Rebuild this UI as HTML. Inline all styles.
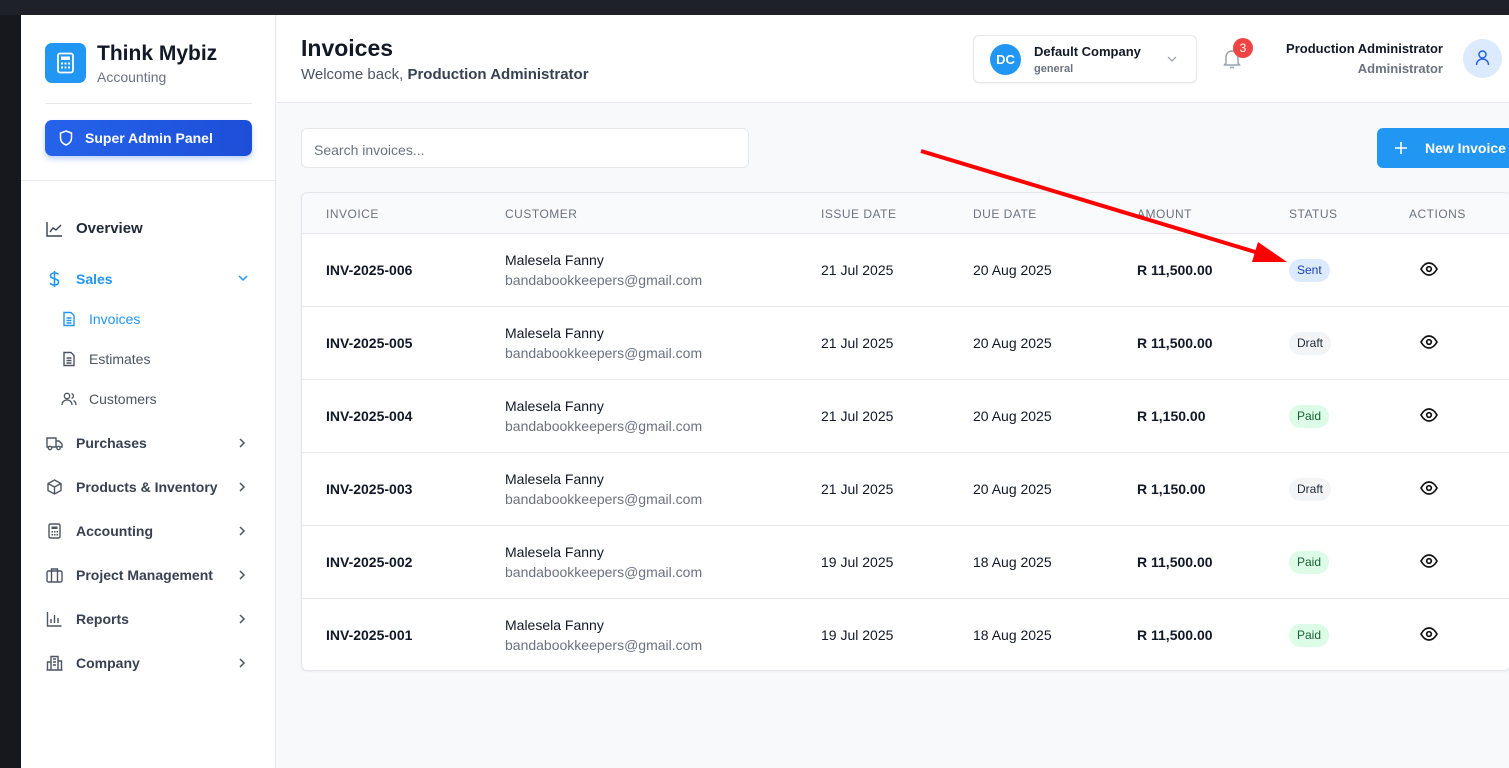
<!DOCTYPE html>
<html><head><meta charset="utf-8"><style>
*{box-sizing:border-box;margin:0;padding:0}
body{width:1509px;height:768px;overflow:hidden;background:#f8f9fb;font-family:"Liberation Sans",sans-serif;position:relative;color:#111827}
.abs{position:absolute}
.topbar{left:0;top:0;width:1509px;height:15px;background:#1f2128}
.leftdark{left:0;top:15px;width:21px;height:753px;background:#17181d}
.side{left:21px;top:15px;width:255px;height:753px;background:#fff;border-right:1px solid #e5e7eb}
.hdr{left:277px;top:15px;width:1232px;height:88px;background:#fff;border-bottom:1px solid #e5e7eb}
.nav{position:absolute;left:25px;font-size:14px;color:#374151;font-weight:bold;display:flex;align-items:center}
.nav svg{margin-right:13px}
.chev{position:absolute;left:216px;color:#4b5563}
.sub{position:absolute;left:40px;font-size:14px;color:#4b5563;display:flex;align-items:center}
.sub svg{margin-right:12px}
.th{position:absolute;top:207px;font-size:12px;color:#6b7280;letter-spacing:.5px}
.row{position:absolute;left:302px;width:1207px;height:73px;border-top:1px solid #e5e7eb;background:#fff}
.c{position:absolute;font-size:14px;color:#111827}
.b{font-weight:bold}
.badge{position:absolute;left:987px;top:25px;height:23px;padding:0 8px;border-radius:12px;font-size:12px;line-height:23px}
</style></head><body>
<div class="abs topbar"></div>
<div class="abs leftdark"></div>
<div class="abs side">
  <div class="abs" style="left:24px;top:28px;width:41px;height:40px;background:#2196f3;border-radius:7px">
    <svg width="41" height="40" viewBox="0 0 41 40"><rect x="13" y="10.5" width="15" height="19" rx="2" fill="none" stroke="#fff" stroke-width="1.8"/><rect x="16" y="13.5" width="9" height="3.5" fill="#fff"/><g fill="#fff"><rect x="16" y="19.5" width="2" height="2"/><rect x="19.5" y="19.5" width="2" height="2"/><rect x="23" y="19.5" width="2" height="2"/><rect x="16" y="23.5" width="2" height="2"/><rect x="19.5" y="23.5" width="2" height="2"/><rect x="23" y="23.5" width="2" height="2"/></g></svg>
  </div>
  <div class="abs" style="left:76px;top:27px;font-size:21px;font-weight:bold;color:#111827">Think Mybiz</div>
  <div class="abs" style="left:76px;top:54px;font-size:14px;color:#6b7280">Accounting</div>
  <div class="abs" style="left:24px;top:88px;width:207px;height:1px;background:#e5e7eb"></div>
  <div class="abs" style="left:24px;top:105px;width:207px;height:36px;border-radius:7px;background:linear-gradient(90deg,#2563eb,#1d4ed8);box-shadow:0 3px 6px rgba(37,99,235,.3);color:#fff;font-size:14px;font-weight:bold;display:flex;align-items:center;padding-left:14px">
    <svg width="14" height="16" viewBox="0 0 14 16" style="margin-right:12px"><path d="M7 1L12.5 3v5c0 3.5-2.5 5.8-5.5 7C4 13.8 1.5 11.5 1.5 8V3z" fill="none" stroke="#fff" stroke-width="1.5"/></svg>Super Admin Panel</div>
  <div class="abs" style="left:0;top:165px;width:255px;height:1px;background:#e5e7eb"></div>
  <div class="nav" style="top:205px;font-size:15px;color:#1f2937"><svg width="17" height="16" viewBox="0 0 17 16"><path d="M1 1v14h15M4 11l3-4 3 2 5-5" fill="none" stroke="#374151" stroke-width="1.4"/></svg>Overview</div>
  <div class="nav" style="top:255px;color:#2196f3"><svg width="17" height="18" viewBox="0 0 17 18"><path d="M8.5 1v16M12.5 4.5C12 3.5 10.5 3 8.5 3 6 3 4.5 4 4.5 5.8 4.5 9.5 12.5 8 12.5 12 12.5 14 11 15 8.5 15 6 15 4.8 14.2 4.2 13" fill="none" stroke="#2196f3" stroke-width="1.6"/></svg>Sales</div>
  <svg class="chev" style="top:258px" width="12" height="10" viewBox="0 0 12 10"><path d="M2 3l4 4 4-4" fill="none" stroke="#2196f3" stroke-width="1.5"/></svg>
  <div class="sub" style="top:296px;color:#2196f3"><svg width="16" height="16" viewBox="0 0 16 16"><path d="M3 1.5h7l3 3v10H3z M5.5 7h5M5.5 9.5h5M5.5 12h5" fill="none" stroke="#2196f3" stroke-width="1.4"/></svg>Invoices</div>
  <div class="sub" style="top:336px"><svg width="16" height="16" viewBox="0 0 16 16"><path d="M3 1.5h7l3 3v10H3z M5.5 7h5M5.5 9.5h5M5.5 12h5" fill="none" stroke="#4b5563" stroke-width="1.4"/></svg>Estimates</div>
  <div class="sub" style="top:376px"><svg width="16" height="16" viewBox="0 0 16 16"><circle cx="6" cy="5" r="2.7" fill="none" stroke="#4b5563" stroke-width="1.3"/><path d="M1 14c0-3 2.2-5 5-5s5 2 5 5M10.5 2.5a2.6 2.6 0 010 5M12.5 9.5c1.5.7 2.5 2.3 2.5 4.5" fill="none" stroke="#4b5563" stroke-width="1.3"/></svg>Customers</div>
  <div class="nav" style="top:420px"><svg width="17" height="16" viewBox="0 0 17 16"><path d="M1 3h9v9H1zM10 6h3l3 3v3h-6" fill="none" stroke="#4b5563" stroke-width="1.4"/><circle cx="4" cy="13" r="1.7" fill="#fff" stroke="#4b5563" stroke-width="1.3"/><circle cx="12.5" cy="13" r="1.7" fill="#fff" stroke="#4b5563" stroke-width="1.3"/></svg>Purchases</div>
  <div class="nav" style="top:464px"><svg width="17" height="16" viewBox="0 0 17 16"><path d="M8.5 1L15 4.5v7L8.5 15 2 11.5v-7zM2 4.5l6.5 3.5L15 4.5M8.5 8v7" fill="none" stroke="#4b5563" stroke-width="1.4"/></svg>Products &amp; Inventory</div>
  <div class="nav" style="top:508px"><svg width="17" height="16" viewBox="0 0 17 16"><rect x="3" y="1" width="11" height="14" rx="1.5" fill="none" stroke="#4b5563" stroke-width="1.4"/><rect x="5.5" y="3.5" width="6" height="2.5" fill="#4b5563"/><g fill="#4b5563"><rect x="5.5" y="8" width="1.5" height="1.5"/><rect x="8" y="8" width="1.5" height="1.5"/><rect x="10.5" y="8" width="1.5" height="1.5"/><rect x="5.5" y="11" width="1.5" height="1.5"/><rect x="8" y="11" width="1.5" height="1.5"/><rect x="10.5" y="11" width="1.5" height="1.5"/></g></svg>Accounting</div>
  <div class="nav" style="top:552px"><svg width="17" height="16" viewBox="0 0 17 16"><rect x="1" y="4" width="15" height="11" rx="1.5" fill="none" stroke="#4b5563" stroke-width="1.4"/><path d="M5.5 4V2h6v2M5.5 4v11M11.5 4v11" fill="none" stroke="#4b5563" stroke-width="1.4"/></svg>Project Management</div>
  <div class="nav" style="top:596px"><svg width="17" height="16" viewBox="0 0 17 16"><path d="M1.5 1v14h14M5 12V8M8.5 12V4M12 12V7" fill="none" stroke="#4b5563" stroke-width="1.4"/></svg>Reports</div>
  <div class="nav" style="top:640px"><svg width="17" height="16" viewBox="0 0 17 16"><path d="M5 15V1.5h7V15M1.5 15V7H5M12 6h3.5v9M0.5 15h16M7 4h3M7 7h3M7 10h3" fill="none" stroke="#4b5563" stroke-width="1.4"/></svg>Company</div>
  <svg class="chev" style="top:422px" width="10" height="12" viewBox="0 0 10 12"><path d="M3 2l4 4-4 4" fill="none" stroke="#4b5563" stroke-width="1.5"/></svg>
  <svg class="chev" style="top:466px" width="10" height="12" viewBox="0 0 10 12"><path d="M3 2l4 4-4 4" fill="none" stroke="#4b5563" stroke-width="1.5"/></svg>
  <svg class="chev" style="top:510px" width="10" height="12" viewBox="0 0 10 12"><path d="M3 2l4 4-4 4" fill="none" stroke="#4b5563" stroke-width="1.5"/></svg>
  <svg class="chev" style="top:554px" width="10" height="12" viewBox="0 0 10 12"><path d="M3 2l4 4-4 4" fill="none" stroke="#4b5563" stroke-width="1.5"/></svg>
  <svg class="chev" style="top:598px" width="10" height="12" viewBox="0 0 10 12"><path d="M3 2l4 4-4 4" fill="none" stroke="#4b5563" stroke-width="1.5"/></svg>
  <svg class="chev" style="top:642px" width="10" height="12" viewBox="0 0 10 12"><path d="M3 2l4 4-4 4" fill="none" stroke="#4b5563" stroke-width="1.5"/></svg>
</div>
<div class="abs hdr">
  <div class="abs" style="left:24px;top:20px;font-size:23px;font-weight:bold;color:#111827">Invoices</div>
  <div class="abs" style="left:24px;top:51px;font-size:15px;color:#4b5563">Welcome back, <b style="color:#374151">Production Administrator</b></div>
  <div class="abs" style="left:696px;top:20px;width:224px;height:48px;border:1px solid #e5e7eb;border-radius:6px;box-shadow:0 1px 2px rgba(0,0,0,.05)">
    <div class="abs" style="left:16px;top:8px;width:31px;height:31px;border-radius:50%;background:#2196f3;color:#fff;font-size:13px;font-weight:bold;text-align:center;line-height:31px">DC</div>
    <div class="abs" style="left:60px;top:8px;font-size:13px;font-weight:bold;color:#111827">Default Company</div>
    <div class="abs" style="left:60px;top:27px;font-size:11px;font-weight:bold;color:#6b7280">general</div>
    <svg class="abs" style="left:192px;top:18px" width="12" height="10" viewBox="0 0 12 10"><path d="M2 3l4 4 4-4" fill="none" stroke="#9ca3af" stroke-width="1.3"/></svg>
  </div>
  <svg class="abs" style="left:945px;top:33px" width="20" height="22" viewBox="0 0 20 22"><path d="M4 15V9a6 6 0 0112 0v6l1.5 2h-15zM8 19.5h4" fill="none" stroke="#9ca3af" stroke-width="1.5"/></svg>
  <div class="abs" style="left:956px;top:23px;width:20px;height:20px;border-radius:50%;background:#ef4444;color:#fff;font-size:12px;text-align:center;line-height:20px">3</div>
  <div class="abs" style="left:966px;top:26px;width:200px;text-align:right;font-size:13px;font-weight:bold;color:#111827">Production Administrator</div>
  <div class="abs" style="left:966px;top:46px;width:200px;text-align:right;font-size:13px;font-weight:bold;color:#6b7280">Administrator</div>
  <div class="abs" style="left:1186px;top:24px;width:39px;height:39px;border-radius:50%;background:#dbeafe">
    <svg width="39" height="39" viewBox="0 0 39 39"><circle cx="19.5" cy="15.5" r="3.5" fill="none" stroke="#2563eb" stroke-width="1.5"/><path d="M13.5 26c0-3.5 2.7-6 6-6s6 2.5 6 6" fill="none" stroke="#2563eb" stroke-width="1.5"/></svg>
  </div>
</div>
<div class="abs" style="left:301px;top:128px;width:448px;height:40px;background:#fff;border:1px solid #e5e7eb;border-radius:6px;font-size:14px;color:#6b7280;padding:13px 12px">Search invoices...</div>
<div class="abs" style="left:1377px;top:128px;width:140px;height:40px;background:#2196f3;border-radius:6px;color:#fff;font-size:14px;font-weight:bold;line-height:40px;padding-left:48px">New Invoice
  <svg class="abs" style="left:17px;top:13px" width="14" height="14" viewBox="0 0 14 14"><path d="M7 1v12M1 7h12" stroke="#fff" stroke-width="1.6"/></svg></div>
<div class="abs" style="left:301px;top:192px;width:1210px;height:479px;border:1px solid #e5e7eb;border-radius:6px;background:#f9fafb;box-shadow:0 1px 2px rgba(0,0,0,.05)"></div>
<div class="th" style="left:326px">INVOICE</div><div class="th" style="left:505px">CUSTOMER</div><div class="th" style="left:821px">ISSUE DATE</div><div class="th" style="left:973px">DUE DATE</div><div class="th" style="left:1137px">AMOUNT</div><div class="th" style="left:1289px">STATUS</div><div class="th" style="left:1409px">ACTIONS</div>
<div class="row" style="top:233px"><div class="c b" style="left:24px;top:28px">INV-2025-006</div><div class="c" style="left:203px;top:18px">Malesela Fanny</div><div class="c" style="left:203px;top:38px;color:#6b7280">bandabookkeepers@gmail.com</div><div class="c" style="left:519px;top:28px">21 Jul 2025</div><div class="c" style="left:671px;top:28px">20 Aug 2025</div><div class="c b" style="left:835px;top:28px">R 11,500.00</div><div class="badge" style="background:#dbeafe;color:#1e40af">Sent</div><svg class="abs" style="left:1118px;top:28px" width="18" height="14" viewBox="0 0 18 14"><path d="M1 7c2.2-4 5-6 8-6s5.8 2 8 6c-2.2 4-5 6-8 6S3.2 11 1 7z" fill="none" stroke="#111" stroke-width="1.7"/><circle cx="9" cy="7" r="2.3" fill="none" stroke="#111" stroke-width="1.7"/></svg></div>
<div class="row" style="top:306px"><div class="c b" style="left:24px;top:28px">INV-2025-005</div><div class="c" style="left:203px;top:18px">Malesela Fanny</div><div class="c" style="left:203px;top:38px;color:#6b7280">bandabookkeepers@gmail.com</div><div class="c" style="left:519px;top:28px">21 Jul 2025</div><div class="c" style="left:671px;top:28px">20 Aug 2025</div><div class="c b" style="left:835px;top:28px">R 11,500.00</div><div class="badge" style="background:#f3f4f6;color:#1f2937">Draft</div><svg class="abs" style="left:1118px;top:28px" width="18" height="14" viewBox="0 0 18 14"><path d="M1 7c2.2-4 5-6 8-6s5.8 2 8 6c-2.2 4-5 6-8 6S3.2 11 1 7z" fill="none" stroke="#111" stroke-width="1.7"/><circle cx="9" cy="7" r="2.3" fill="none" stroke="#111" stroke-width="1.7"/></svg></div>
<div class="row" style="top:379px"><div class="c b" style="left:24px;top:28px">INV-2025-004</div><div class="c" style="left:203px;top:18px">Malesela Fanny</div><div class="c" style="left:203px;top:38px;color:#6b7280">bandabookkeepers@gmail.com</div><div class="c" style="left:519px;top:28px">21 Jul 2025</div><div class="c" style="left:671px;top:28px">20 Aug 2025</div><div class="c b" style="left:835px;top:28px">R 1,150.00</div><div class="badge" style="background:#dcfce7;color:#166534">Paid</div><svg class="abs" style="left:1118px;top:28px" width="18" height="14" viewBox="0 0 18 14"><path d="M1 7c2.2-4 5-6 8-6s5.8 2 8 6c-2.2 4-5 6-8 6S3.2 11 1 7z" fill="none" stroke="#111" stroke-width="1.7"/><circle cx="9" cy="7" r="2.3" fill="none" stroke="#111" stroke-width="1.7"/></svg></div>
<div class="row" style="top:452px"><div class="c b" style="left:24px;top:28px">INV-2025-003</div><div class="c" style="left:203px;top:18px">Malesela Fanny</div><div class="c" style="left:203px;top:38px;color:#6b7280">bandabookkeepers@gmail.com</div><div class="c" style="left:519px;top:28px">21 Jul 2025</div><div class="c" style="left:671px;top:28px">20 Aug 2025</div><div class="c b" style="left:835px;top:28px">R 1,150.00</div><div class="badge" style="background:#f3f4f6;color:#1f2937">Draft</div><svg class="abs" style="left:1118px;top:28px" width="18" height="14" viewBox="0 0 18 14"><path d="M1 7c2.2-4 5-6 8-6s5.8 2 8 6c-2.2 4-5 6-8 6S3.2 11 1 7z" fill="none" stroke="#111" stroke-width="1.7"/><circle cx="9" cy="7" r="2.3" fill="none" stroke="#111" stroke-width="1.7"/></svg></div>
<div class="row" style="top:525px"><div class="c b" style="left:24px;top:28px">INV-2025-002</div><div class="c" style="left:203px;top:18px">Malesela Fanny</div><div class="c" style="left:203px;top:38px;color:#6b7280">bandabookkeepers@gmail.com</div><div class="c" style="left:519px;top:28px">19 Jul 2025</div><div class="c" style="left:671px;top:28px">18 Aug 2025</div><div class="c b" style="left:835px;top:28px">R 11,500.00</div><div class="badge" style="background:#dcfce7;color:#166534">Paid</div><svg class="abs" style="left:1118px;top:28px" width="18" height="14" viewBox="0 0 18 14"><path d="M1 7c2.2-4 5-6 8-6s5.8 2 8 6c-2.2 4-5 6-8 6S3.2 11 1 7z" fill="none" stroke="#111" stroke-width="1.7"/><circle cx="9" cy="7" r="2.3" fill="none" stroke="#111" stroke-width="1.7"/></svg></div>
<div class="row" style="top:598px;height:72px;border-radius:0 0 6px 6px"><div class="c b" style="left:24px;top:28px">INV-2025-001</div><div class="c" style="left:203px;top:18px">Malesela Fanny</div><div class="c" style="left:203px;top:38px;color:#6b7280">bandabookkeepers@gmail.com</div><div class="c" style="left:519px;top:28px">19 Jul 2025</div><div class="c" style="left:671px;top:28px">18 Aug 2025</div><div class="c b" style="left:835px;top:28px">R 11,500.00</div><div class="badge" style="background:#dcfce7;color:#166534">Paid</div><svg class="abs" style="left:1118px;top:28px" width="18" height="14" viewBox="0 0 18 14"><path d="M1 7c2.2-4 5-6 8-6s5.8 2 8 6c-2.2 4-5 6-8 6S3.2 11 1 7z" fill="none" stroke="#111" stroke-width="1.7"/><circle cx="9" cy="7" r="2.3" fill="none" stroke="#111" stroke-width="1.7"/></svg></div>
<svg class="abs" style="left:0;top:0" width="1509" height="768"><line x1="921" y1="151" x2="1262" y2="254" stroke="#ff0000" stroke-width="4"/><polygon points="1287,262 1258,242 1252,262" fill="#ff0000"/></svg>
</body></html>
